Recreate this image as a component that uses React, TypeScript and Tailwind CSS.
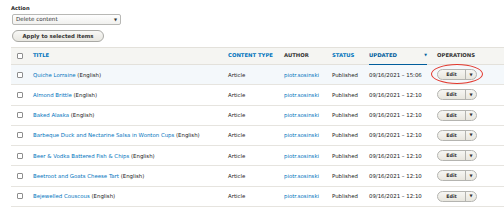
import React from "react";

const rows = [
  { title: "Quiche Lorraine", time: "15:06", highlight: true },
  { title: "Almond Brittle", time: "12:10" },
  { title: "Baked Alaska", time: "12:10" },
  { title: "Barbeque Duck and Nectarine Salsa in Wonton Cups", time: "12:10" },
  { title: "Beer & Vodka Battered Fish & Chips", time: "12:10" },
  { title: "Beetroot and Goats Cheese Tart", time: "12:10" },
  { title: "Bejewelled Couscous", time: "12:10" },
];

const grid = "grid grid-cols-[22px_195px_56px_48px_37px_68px_1fr] items-center";

function Checkbox() {
  return <span className="block w-[6px] h-[6px] border border-[#8e8e8e] rounded-[1px] bg-white ml-[6px]" />;
}

function EditButton({ circled }: { circled?: boolean }) {
  return (
    <div className="relative w-[40px]">
      <div className="flex h-[11px] w-[40px] rounded-full border border-[#b4b4b0] bg-gradient-to-b from-[#f6f6f3] to-[#e8e6de] text-[4.8px] font-bold text-[#333]">
        <span className="flex-1 flex items-center justify-center border-r border-[#b4b4b0]">Edit</span>
        <span className="w-[10px] flex items-center justify-center text-[4px] leading-none">▼</span>
      </div>
      {circled && (
        <div className="absolute left-[-6px] top-[-5px] w-[52px] h-[20px] rounded-[50%] border-[1.5px] border-[#e2372c]" />
      )}
    </div>
  );
}

export default function App() {
  return (
    <div className="w-[504px] h-[208px] bg-white overflow-hidden font-['DejaVu_Sans',sans-serif] text-[#222] text-[5.4px]">
      <div className="pl-[11px] pt-[5px]">
        <div className="font-bold text-[5.2px] leading-[7px] text-[#222]">Action</div>
        <div className="mt-[2px] ml-[1px] w-[109px] h-[11px] border border-[#b8b8b5] rounded-[2px] bg-gradient-to-b from-[#fefefe] to-[#f0f0ee] flex items-center justify-between pl-[3px] pr-[3px] text-[#333] text-[5.6px]">
          <span>Delete content</span>
          <span className="text-[4px]">▼</span>
        </div>
        <div className="mt-[5px] ml-[1px] w-[92px] h-[12px] rounded-full border border-[#a9a9a5] bg-gradient-to-b from-[#f8f8f6] to-[#e8e7e1] flex items-center justify-center font-bold text-[#333] text-[5.35px]">
          Apply to selected items
        </div>
      </div>
      <div className="ml-[11px] mt-[5px]">
        <div className={`${grid} h-[18px] bg-[#f5f5f2] border-t border-b border-[#e3e1db] font-bold uppercase text-[5.3px]`}>
          <Checkbox />
          <span className="text-[#0074bd]">Title</span>
          <span className="text-[#0074bd]">Content type</span>
          <span className="text-[#333]">Author</span>
          <span className="text-[#0074bd]">Status</span>
          <span className="relative h-full flex items-center justify-between pr-[10px] text-[#005d9c]">
            <span>Updated</span>
            <span className="text-[3.5px]">▼</span>
            <span className="absolute left-0 right-[10px] bottom-[-1px] h-[1px] bg-[#005d9c]" />
          </span>
          <span className="text-[#333]">Operations</span>
        </div>
        {rows.map((r, i) => (
          <div
            key={i}
            className={`${grid} h-[20.25px] border-b border-[#e6e4df] ${r.highlight ? "bg-[#f4f8fb]" : "bg-white"}`}
          >
            <Checkbox />
            <span className="whitespace-nowrap">
              <span className="text-[#0074bd]">{r.title}</span> (English)
            </span>
            <span>Article</span>
            <span className="text-[#0074bd]">piotr.sosinski</span>
            <span>Published</span>
            <span className="whitespace-nowrap">09/16/2021 – {r.time}</span>
            <EditButton circled={r.highlight} />
          </div>
        ))}
      </div>
    </div>
  );
}
